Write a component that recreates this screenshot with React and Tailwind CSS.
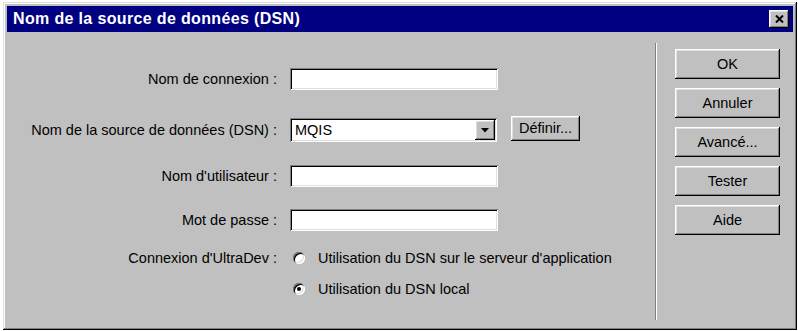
import React from 'react';

const raised = 'shadow-[inset_-1px_-1px_#000,inset_1px_1px_#fff,inset_-2px_-2px_#808080,inset_2px_2px_#dfdfdf]';
const sunken = 'shadow-[inset_1px_1px_#808080,inset_-1px_-1px_#fff,inset_2px_2px_#000,inset_-2px_-2px_#dfdfdf]';

function Field({ className = '' }) {
  return <div className={`h-[22px] w-[208px] bg-white ${sunken} ${className}`} />;
}

function Radio({ checked }) {
  return (
    <span className={`relative w-[12px] h-[12px] rounded-full bg-white ${sunken} flex items-center justify-center`}>
      {checked && <span className="w-[4px] h-[4px] rounded-full bg-black" />}
    </span>
  );
}

function SideButton({ label }) {
  return (
    <div className={`w-[105px] h-[30px] bg-[#c0c0c0] ${raised} flex items-center justify-center`}>
      {label}
    </div>
  );
}

export default function App() {
  const buttons = ['OK', 'Annuler', 'Avancé...', 'Tester', 'Aide'];

  return (
    <div className="w-[798px] h-[331px] bg-white pl-[3px] pt-[2px] font-['Liberation_Sans',Arial,sans-serif] text-[14.5px] text-black leading-none">
      <div className="w-[794px] h-[328px] bg-[#c0c0c0] p-[4px] shadow-[inset_-1px_-1px_#000,inset_1px_1px_#dfdfdf,inset_-2px_-2px_#808080,inset_2px_2px_#fff] flex flex-col">
        {/* title bar */}
        <div className="h-[26px] bg-[#000080] flex items-center justify-between pl-[6px] pr-[4px] shrink-0">
          <span className="text-white font-bold text-[16px] tracking-[0.35px]">Nom de la source de données (DSN)</span>
          <div className={`w-[20px] h-[18px] bg-[#c0c0c0] ${raised} flex items-center justify-center`}>
            <svg width="9" height="8" viewBox="0 0 9 8">
              <path d="M1 0.5 L8 7.5 M8 0.5 L1 7.5" stroke="#000" strokeWidth="2" />
            </svg>
          </div>
        </div>

        <div className="flex flex-1">
          {/* form */}
          <div className="w-[648px] flex flex-col">
            <div className="grid grid-cols-[270px_auto] gap-x-[13px] items-center mt-[36px]">
              <span className="text-right">Nom de connexion :</span>
              <Field />
            </div>

            <div className="grid grid-cols-[270px_auto] gap-x-[13px] items-center mt-[28px]">
              <span className="text-right">Nom de la source de données (DSN) :</span>
              <div className="flex items-center">
                <div className={`h-[24px] w-[207px] bg-white ${sunken} flex items-center justify-between pl-[5px] pr-[2px]`}>
                  <span>MQIS</span>
                  <div className={`w-[20px] h-[20px] bg-[#c0c0c0] ${raised} flex items-center justify-center`}>
                    <svg width="8" height="5" viewBox="0 0 8 5">
                      <path d="M0 0 H8 L4 4.5 Z" fill="#000" />
                    </svg>
                  </div>
                </div>
                <div className={`ml-[14px] w-[69px] h-[25px] bg-[#c0c0c0] ${raised} flex items-center justify-center -mt-[3px]`}>
                  Définir...
                </div>
              </div>
            </div>

            <div className="grid grid-cols-[270px_auto] gap-x-[13px] items-center mt-[23px]">
              <span className="text-right">Nom d'utilisateur :</span>
              <Field />
            </div>

            <div className="grid grid-cols-[270px_auto] gap-x-[13px] items-center mt-[22px]">
              <span className="text-right">Mot de passe :</span>
              <Field />
            </div>

            <div className="grid grid-cols-[270px_auto] gap-x-[13px] items-center mt-[17px] h-[20px]">
              <span className="text-right">Connexion d'UltraDev :</span>
              <div className="flex items-center gap-[13px] pl-[3px]">
                <Radio />
                <span>Utilisation du DSN sur le serveur d'application</span>
              </div>
            </div>

            <div className="grid grid-cols-[270px_auto] gap-x-[13px] items-center mt-[11px] h-[20px]">
              <span />
              <div className="flex items-center gap-[13px] pl-[3px]">
                <Radio checked />
                <span>Utilisation du DSN local</span>
              </div>
            </div>
          </div>

          {/* separator */}
          <div className="w-[2px] mt-[11px] mb-[6px] border-l border-l-[#808080] border-r border-r-white" />

          {/* buttons */}
          <div className="ml-[18px] mt-[17px] flex flex-col gap-[9px]">
            {buttons.map((b) => (
              <SideButton key={b} label={b} />
            ))}
          </div>
        </div>
      </div>
    </div>
  );
}
